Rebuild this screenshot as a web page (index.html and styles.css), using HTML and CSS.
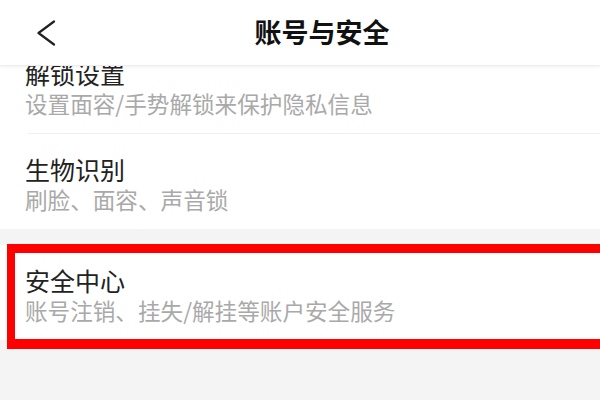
FILE: index.html
```html
<!DOCTYPE html>
<html lang="zh-CN">
<head>
<meta charset="utf-8">
<title>账号与安全</title>
<link rel="stylesheet" href="styles.css">
</head>
<body>
<div class="screen">
  <header class="topbar">
    <div class="topbar-inner">
      <span class="back">
        <svg width="20" height="26" viewBox="0 0 20 26"><path d="M17 1.5 L1.5 13 L17 24.5" fill="none" stroke="#222" stroke-width="2.2" stroke-linecap="round" stroke-linejoin="round"/></svg>
      </span>
      <h1 class="title">账号与安全</h1>
      <span></span>
    </div>
  </header>
  <main class="list">
    <section class="group">
      <div class="row">
        <div class="row-title">解锁设置</div>
        <div class="row-sub">设置面容/手势解锁来保护隐私信息</div>
      </div>
      <div class="divider"><div class="divider-line"></div></div>
      <div class="row">
        <div class="row-title">生物识别</div>
        <div class="row-sub">刷脸、面容、声音锁</div>
      </div>
    </section>
    <section class="group group-gap">
      <div class="row row-marked">
        <div class="row-title">安全中心</div>
        <div class="row-sub">账号注销、挂失/解挂等账户安全服务</div>
        <span class="mark"></span>
      </div>
    </section>
  </main>
</div>
</body>
</html>
```

FILE: styles.css
```css
html, body {
  margin: 0;
  padding: 0;
}
body {
  width: 600px;
  height: 400px;
  overflow: hidden;
  background: #f4f4f4;
  font-family: "Noto Sans CJK SC", "Noto Sans", sans-serif;
}
.screen {
  width: 600px;
  height: 400px;
  overflow: hidden;
  background: #f4f4f4;
}
.topbar {
  position: relative;
  z-index: 2;
  height: 65px;
  background: #fff;
  border-bottom: 1px solid #ededed;
  box-shadow: 0 1px 3px rgba(0, 0, 0, 0.06);
}
.topbar-inner {
  width: 644px;
  height: 63px;
  display: grid;
  grid-template-columns: 1fr auto 1fr;
  align-items: center;
}
.back {
  justify-self: start;
  margin-left: 37px;
  display: flex;
  padding-top: 3px;
}
.title {
  margin: 0;
  font-size: 27px;
  font-weight: 700;
  color: #111;
  line-height: 34px;
  padding-top: 1px;
}
.list {
  margin-top: -28px;
}
.group {
  background: #fff;
}
.group-gap {
  margin-top: 16px;
}
.row {
  height: 95px;
  box-sizing: border-box;
  padding: 20px 0 0 25px;
}
.row-title {
  font-size: 25px;
  line-height: 30px;
  color: #222;
}
.row-sub {
  font-size: 22.6px;
  line-height: 32px;
  color: #a9a9a9;
}
.divider {
  padding-left: 28px;
}
.divider-line {
  height: 1px;
  background: #efefef;
}
.row-marked {
  position: relative;
}
.mark {
  position: absolute;
  top: -1px;
  left: 7px;
  right: -40px;
  bottom: -9px;
  border: 9px solid #ff0000;
  border-left-width: 8px;
  border-bottom-width: 10px;
}
```
